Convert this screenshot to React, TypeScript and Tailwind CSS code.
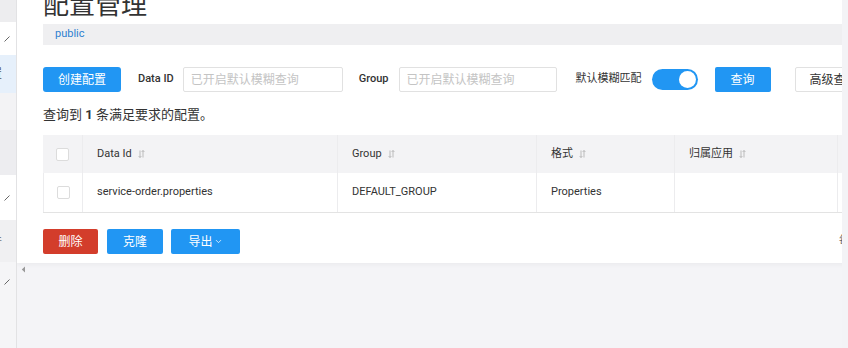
import { ChevronDown } from "lucide-react";

const font = "font-['Roboto','Noto_Sans_CJK_SC',sans-serif]";

function SortIcon() {
  return (
    <svg width="7" height="8" viewBox="0 0 7 8" className="ml-[6px] shrink-0">
      <path d="M2 0.5 V7.5 M0.6 6 L2 7.5 L3.4 6" stroke="#b5b5b5" strokeWidth="0.9" fill="none" />
      <path d="M5 7.5 V0.5 M3.6 2 L5 0.5 L6.4 2" stroke="#b5b5b5" strokeWidth="0.9" fill="none" />
    </svg>
  );
}

function Tick() {
  return (
    <svg width="6" height="6" viewBox="0 0 6 6">
      <path d="M0.5 5.5 L5.5 0.5" stroke="#666" strokeWidth="1" fill="none" />
    </svg>
  );
}

function Checkbox() {
  return <div className="h-[13px] w-[13px] rounded-[2px] border border-[#dcdcdc] bg-white" />;
}

export default function App() {
  const columns = [
    { name: "Data Id", w: "w-[255px]" },
    { name: "Group", w: "w-[199px]" },
    { name: "格式", w: "w-[138px]" },
    { name: "归属应用", w: "w-[163px]" },
  ];

  return (
    <div className={`flex h-[348px] w-[848px] overflow-hidden bg-[#f4f4f7] ${font}`}>
      {/* Sidebar (mostly off screen) */}
      <div className="flex w-[17px] shrink-0 flex-col border-r border-[#e2e2e4] overflow-hidden">
        <div className="h-[22px] bg-[#ededef]" />
        <div className="flex h-[33px] items-center bg-white pl-[4px]">
          <Tick />
        </div>
        <div className="flex h-[38px] items-center bg-[#e6f0fb]">
          <span className="ml-[-10px] text-[12px] text-[#555]">置</span>
        </div>
        <div className="h-[37px] bg-[#f3f3f5]" />
        <div className="h-[45px] bg-[#ededf0]" />
        <div className="flex h-[45px] items-center bg-white pl-[4px]">
          <Tick />
        </div>
        <div className="flex h-[42px] items-center bg-[#f0f0f2]">
          <span className="ml-[-10px] text-[12px] text-[#777]">件</span>
        </div>
        <div className="flex flex-1 items-start bg-[#f5f5f7] pl-[4px] pt-[17px]">
          <Tick />
        </div>
      </div>

      {/* Main */}
      <div className="flex w-[825px] shrink-0 flex-col overflow-hidden">
        <div className="w-[900px] bg-white pl-[26px] pb-[9px] shadow-[0_2px_4px_rgba(0,0,0,0.04)]">
          <h1 className="mt-[-13px] h-[37px] text-[26px] leading-[37px] font-normal text-[#333]">配置管理</h1>

          <div className="flex h-[21px] w-[820px] items-center bg-[#efeff1] pl-[12px] text-[11px] text-[#2e7fd0]">
            public
          </div>

          {/* Toolbar */}
          <div className="mt-[22px] flex h-[25px] items-center text-[12px]">
            <button className="h-[25px] w-[78px] rounded-[3px] bg-[#2196f3] text-white">创建配置</button>
            <span className="ml-[17px] text-[11px] font-medium text-[#333]">Data ID</span>
            <div className="ml-[9px] flex h-[25px] w-[160px] items-center rounded-[2px] border border-[#e1e1e1] pl-[7px] text-[#c4c4c4]">
              已开启默认模糊查询
            </div>
            <span className="ml-[16px] text-[11px] font-medium text-[#333]">Group</span>
            <div className="ml-[10px] flex h-[25px] w-[158px] items-center rounded-[2px] border border-[#e1e1e1] pl-[7px] text-[#c4c4c4]">
              已开启默认模糊查询
            </div>
            <span className="ml-[19px] text-[11px] text-[#333]">默认模糊匹配</span>
            <div className="ml-[10px] flex h-[21px] w-[46px] items-center justify-end rounded-full bg-[#2196f3] pr-[2px]">
              <div className="h-[17px] w-[17px] rounded-full bg-white" />
            </div>
            <button className="ml-[17px] h-[25px] w-[56px] rounded-[2px] bg-[#2196f3] text-white">查询</button>
            <button className="ml-[24px] h-[25px] w-[78px] rounded-[2px] border border-[#e1e1e1] bg-white text-[#333]">
              高级查询
            </button>
          </div>

          <p className="mt-[14px] text-[13px] leading-[18px] text-[#333]">
            查询到 <b className="font-bold">1</b> 条满足要求的配置。
          </p>

          {/* Table */}
          <div className="mt-[11px] w-[820px] border-b border-[#e3e3e3]">
            <div className="flex h-[38px] bg-[#f3f3f5] text-[11px] text-[#333]">
              <div className="flex w-[40px] items-center justify-center border-r border-[#ececee]">
                <Checkbox />
              </div>
              {columns.map((c) => (
                <div key={c.name} className={`flex ${c.w} items-center border-r border-[#ececee] pl-[14px]`}>
                  {c.name}
                  <SortIcon />
                </div>
              ))}
              <div className="flex-1" />
            </div>
            <div className="flex h-[39px] border-l border-[#ececee] text-[11px] text-[#333]">
              <div className="flex w-[39px] items-center justify-center border-r border-[#ececee]">
                <Checkbox />
              </div>
              <div className="flex w-[255px] items-center border-r border-[#ececee] pl-[14px]">service-order.properties</div>
              <div className="flex w-[199px] items-center border-r border-[#ececee] pl-[14px]">DEFAULT_GROUP</div>
              <div className="flex w-[138px] items-center border-r border-[#ececee] pl-[14px]">Properties</div>
              <div className="flex w-[163px] items-center border-r border-[#ececee] pl-[14px]" />
              <div className="flex-1" />
            </div>
          </div>

          {/* Batch actions */}
          <div className="mt-[16px] flex h-[25px] items-center text-[12px] text-white">
            <button className="h-[25px] w-[55px] rounded-[2px] bg-[#d33d2b]">删除</button>
            <button className="ml-[9px] h-[25px] w-[56px] rounded-[2px] bg-[#2196f3]">克隆</button>
            <button className="ml-[8px] flex h-[25px] w-[69px] items-center justify-center rounded-[2px] bg-[#2196f3]">
              导出
              <ChevronDown className="ml-[1px] h-[9px] w-[9px]" strokeWidth={2} />
            </button>
            <span className="ml-[599px] text-[11px] text-[#666]">每页显示</span>
          </div>
        </div>

        <div className="pl-[4px] pt-[3px]">
          <svg width="5" height="7" viewBox="0 0 5 7">
            <path d="M4 0.5 L0.8 3.5 L4 6.5 Z" fill="#999" />
          </svg>
        </div>
      </div>

      <div className="flex-1 bg-[#f3f3f6]" />
    </div>
  );
}
